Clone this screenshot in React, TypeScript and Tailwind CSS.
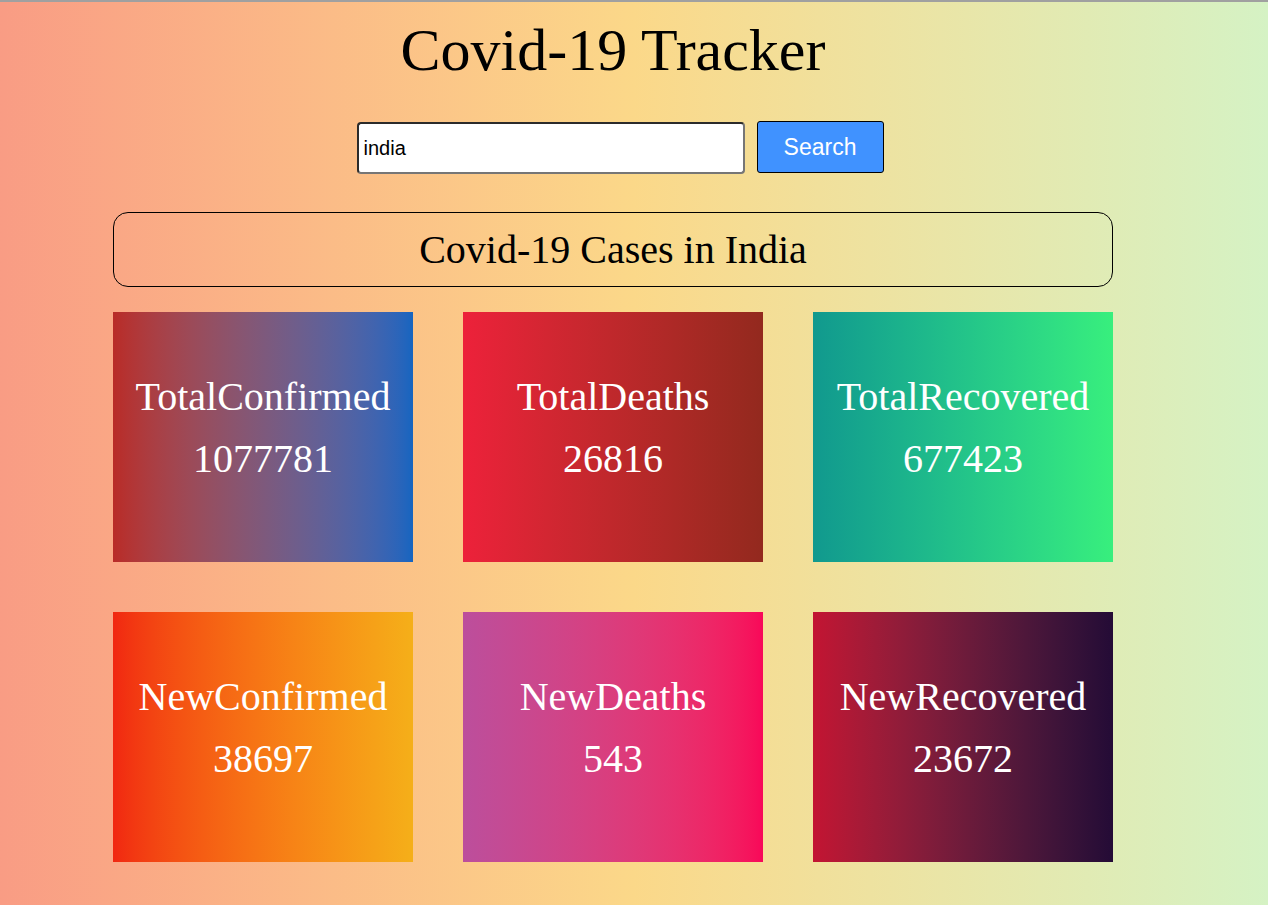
import { useState } from 'react'

const CARDS = [
  { label: 'TotalConfirmed', value: 1077781, bg: 'bg-gradient-to-r from-[#b92b27] to-[#1565c0]' },
  { label: 'TotalDeaths', value: 26816, bg: 'bg-gradient-to-r from-[#ed213a] to-[#93291e]' },
  { label: 'TotalRecovered', value: 677423, bg: 'bg-gradient-to-r from-[#11998e] to-[#38ef7d]' },
  { label: 'NewConfirmed', value: 38697, bg: 'bg-gradient-to-r from-[#f12711] to-[#f5af19]' },
  { label: 'NewDeaths', value: 543, bg: 'bg-gradient-to-r from-[#bc4e9c] to-[#f80759]' },
  { label: 'NewRecovered', value: 23672, bg: 'bg-gradient-to-r from-[#c31432] to-[#240b36]' },
]

export default function App() {
  const [country, setCountry] = useState('india')

  return (
    <div className="min-h-[905px] w-full border-t-2 border-[#a0a0a0] bg-gradient-to-r from-[#f99c84] via-[#fbd889] to-[#d5f2c4] font-['Liberation_Serif','Times_New_Roman',serif]">
      <div className="ml-[113px] w-[1000px]">
        {/* Header */}
        <h1 className="pt-[18px] text-center text-[60px] leading-[60px] text-black">Covid-19 Tracker</h1>

        {/* Search */}
        <div className="mt-[42px] flex items-center justify-center gap-3 pl-[14px]">
          <input
            value={country}
            onChange={e => setCountry(e.target.value)}
            className="h-[52px] w-[388px] rounded-[4px] border-2 border-t-[#2b2b2b] border-l-[#2b2b2b] border-b-[#767676] border-r-[#767676] bg-white px-[5px] font-['Liberation_Sans',Arial,sans-serif] text-[20px] text-black outline-none"
          />
          <button className="-mt-[2px] h-[52px] w-[127px] rounded-[3px] border-[1.5px] border-black bg-[#4092ff] font-['Liberation_Sans',Arial,sans-serif] text-[23px] text-white">
            Search
          </button>
        </div>

        {/* Country heading */}
        <div className="mt-[38px] h-[75px] rounded-[15px] border border-black text-center text-[40px] leading-[73px] text-black">
          Covid-19 Cases in India
        </div>

        {/* Stats */}
        <div className="mt-[25px] grid grid-cols-3 gap-[50px]">
          {CARDS.map(c => (
            <div key={c.label} className={`h-[250px] pt-[54px] text-center text-[40px] leading-[62px] text-white ${c.bg}`}>
              <div>{c.label}</div>
              <div>{c.value}</div>
            </div>
          ))}
        </div>
      </div>
    </div>
  )
}
